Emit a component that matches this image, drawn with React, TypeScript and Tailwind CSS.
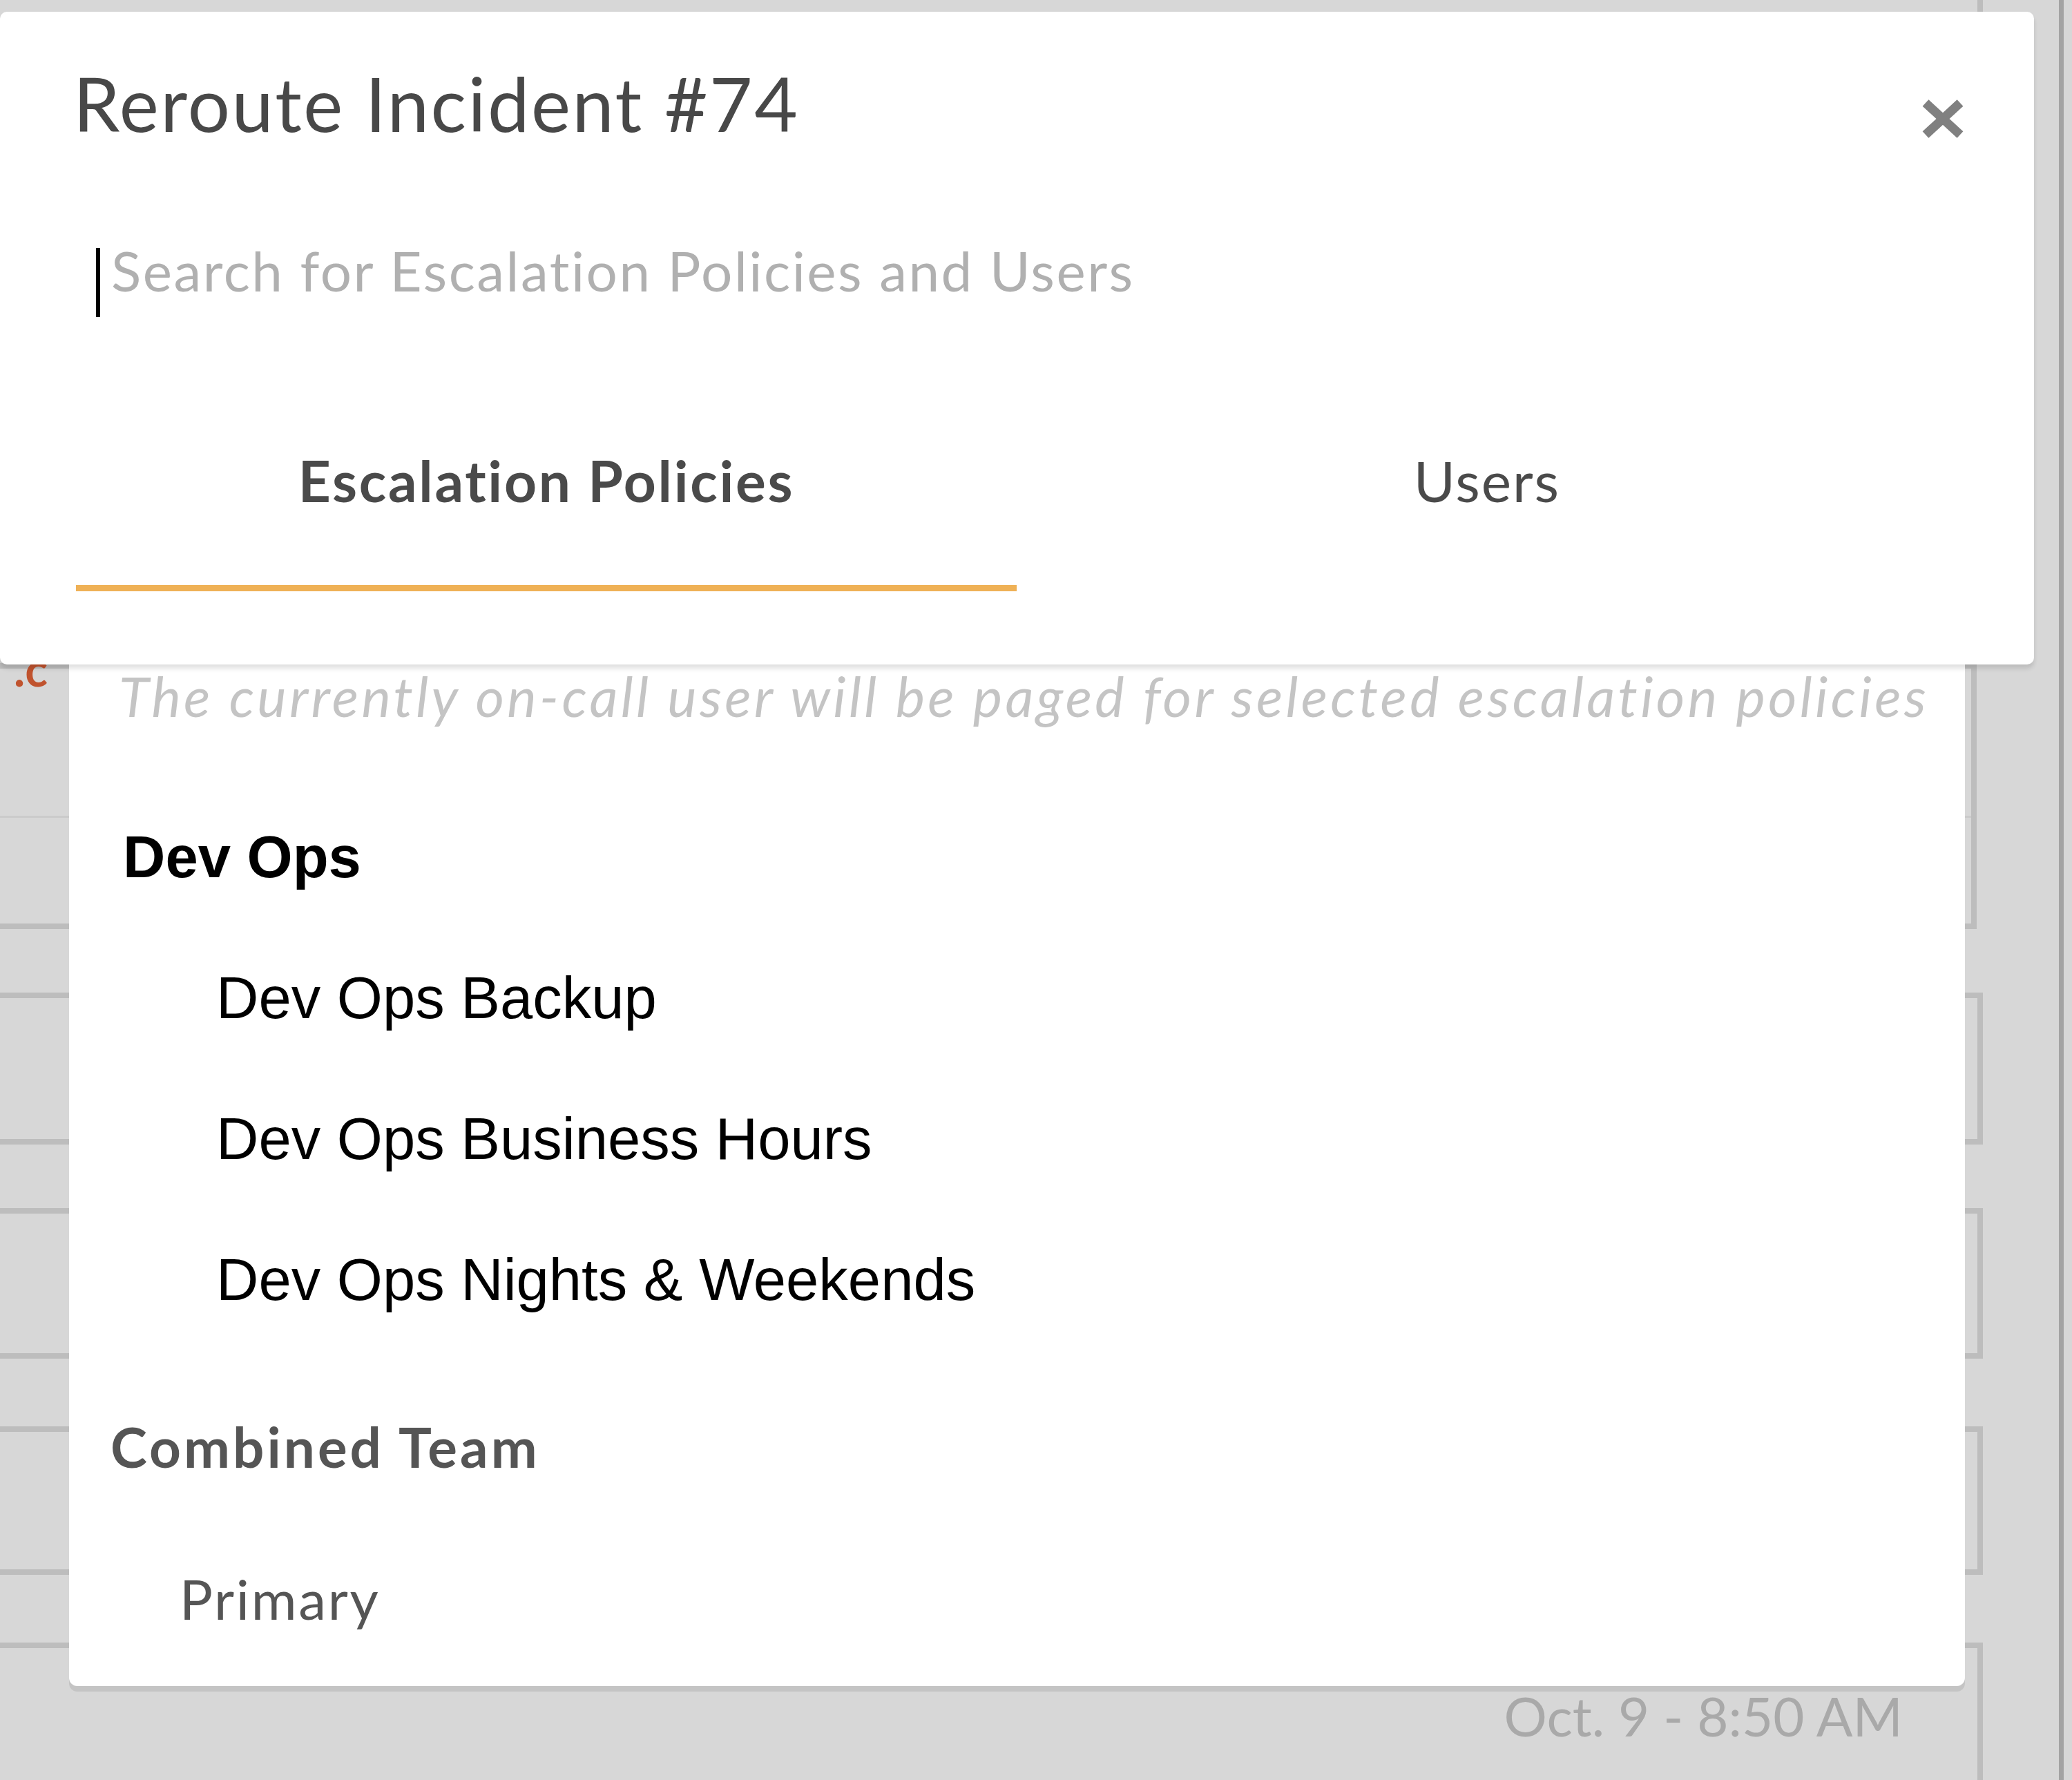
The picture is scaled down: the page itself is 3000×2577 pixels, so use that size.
import React from "react";

const appFont = "font-['Lato','Open_Sans',sans-serif]";
const arialFont = "font-['Liberation_Sans',Arial,sans-serif]";

function CloseIcon() {
    return (
        <svg width="64" height="58" viewBox="0 0 64 58">
            <path d="M7 6 L57 52 M57 6 L7 52" stroke="#808080" strokeWidth="13" strokeLinecap="butt" fill="none" />
        </svg>
    );
}

function BackgroundPage() {
    return (
        <div className={`absolute inset-0 flex flex-col ${appFont}`}>
            <div className="w-[2871px] h-[1170px] -mt-[300px] shrink-0 border-y-[8px] border-r-[8px] border-[#bdbdbd] flex items-end justify-end pr-[108px] pb-[780px]">
                <div className="text-[78px] leading-none text-[#a9a9a9] -mb-[40px]">Oct. 9 - 8:51 AM</div>
            </div>
            <div className="w-[2862px] h-[385px] mt-[90px] shrink-0 border-y-[8px] border-r-[8px] border-[#bdbdbd] flex flex-col">
                <div className="h-[216px] shrink-0 border-b-[3px] border-[#cbcbcb]">
                    <div className="text-[#c0532e] text-[68px] leading-none font-bold ml-[20px] -mt-[34px]">.c</div>
                </div>
            </div>
            <div className="w-[2871px] h-[220px] mt-[92px] shrink-0 border-y-[8px] border-r-[8px] border-[#bdbdbd]" />
            <div className="w-[2871px] h-[218px] mt-[92px] shrink-0 border-y-[8px] border-r-[8px] border-[#bdbdbd]" />
            <div className="w-[2871px] h-[215px] mt-[98px] shrink-0 border-y-[8px] border-r-[8px] border-[#bdbdbd]" />
            <div className="w-[2871px] h-[320px] mt-[98px] shrink-0 border-y-[8px] border-r-[8px] border-[#bdbdbd] flex justify-end pr-[108px] pt-[59px]">
                <div className="text-[78px] leading-none text-[#a9a9a9]">Oct. 9 - 8:50 AM</div>
            </div>
        </div>
    );
}

function Tabs() {
    return (
        <div className="flex mt-[195px] pl-[110px] pr-[111px]">
            <div className="flex-1 flex justify-center pb-[111px] border-b-[9px] border-[#efb156]">
                <span className="text-[82px] leading-none font-bold tracking-[2.7px] text-[#4a4a4a]">Escalation Policies</span>
            </div>
            <div className="flex-1 flex justify-center pb-[111px] border-b-[9px] border-transparent">
                <span className="text-[82px] leading-none tracking-[2px] text-[#4a4a4a]">Users</span>
            </div>
        </div>
    );
}

function PolicyList() {
    const devOps = ["Dev Ops Backup", "Dev Ops Business Hours", "Dev Ops Nights & Weekends"];
    return (
        <div className="mx-[100px] bg-white rounded-b-[12px] shadow-[0_8px_0_#c4c4c4] pt-[5px] pb-[87px] flex flex-col">
            <div className={`${appFont} italic text-[80px] leading-none tracking-[4.3px] text-[#c4c4c4] pl-[72px] whitespace-nowrap`}>
                The currently on-call user will be paged for selected escalation policies
            </div>
            <div className={`${arialFont} text-[85px] leading-none font-bold text-black pl-[78px] mt-[151px]`}>Dev Ops</div>
            {devOps.map((name) => (
                <div key={name} className={`${arialFont} text-[85px] leading-none text-black pl-[213px] mt-[119px]`}>{name}</div>
            ))}
            <div className={`${appFont} text-[80px] leading-none font-bold tracking-[4px] text-[#555555] pl-[60px] mt-[159px]`}>Combined Team</div>
            <div className={`${appFont} text-[80px] leading-none tracking-[2.7px] text-[#555555] pl-[160px] mt-[140px]`}>Primary</div>
        </div>
    );
}

export default function App() {
    return (
        <div className="relative w-[3000px] h-[2577px] bg-[#d7d7d7] overflow-hidden">
            <BackgroundPage />
            <div className="absolute right-[12px] top-0 bottom-0 w-[7px] bg-[#a3a3a3]" />
            <div className={`absolute top-[17px] left-0 w-[2945px] flex flex-col ${appFont}`}>
                <div className="bg-white rounded-[10px] shadow-[0_6px_6px_rgba(0,0,0,0.12)] pt-[78px] pb-[106px] relative z-10">
                    <div className="flex items-start justify-between pl-[106px] pr-[100px]">
                        <h1 className="text-[108px] leading-none tracking-[2.5px] text-[#484848]">Reroute Incident #74</h1>
                        <div className="mt-[48px]">
                            <CloseIcon />
                        </div>
                    </div>
                    <div className="flex items-start pl-[139px] mt-[138px]">
                        <div className="w-[6px] h-[100px] bg-black mt-[18px]" />
                        <div className="ml-[16px] text-[80px] leading-[100px] tracking-[2.5px] text-[#b0b0b0]">Search for Escalation Policies and Users</div>
                    </div>
                    <Tabs />
                </div>
                <PolicyList />
            </div>
        </div>
    );
}
